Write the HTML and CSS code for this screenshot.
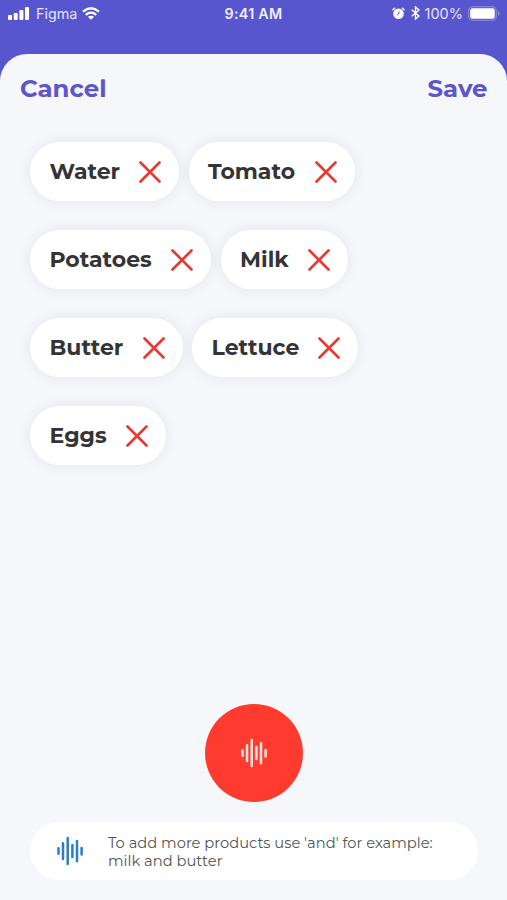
FILE: index.html
```html
<!DOCTYPE html>
<html lang="en">
<head>
<meta charset="utf-8">
<title>Shopping list</title>
<link rel="stylesheet" href="styles.css">
</head>
<body>
<svg class="defs" aria-hidden="true">
  <symbol id="cross" viewBox="0 0 22 22"><path d="M1.5 1.5 20.5 20.5M20.5 1.5 1.5 20.5" fill="none" stroke="currentColor" stroke-width="2.7" stroke-linecap="round"/></symbol>
  <symbol id="wave" viewBox="0 0 28 30"><path d="M2.5 12.3v5.4M7 7.3v15.7M11.7 2v26M16.4 9v12M21 5v20.3M25.6 12v6.5" fill="none" stroke="currentColor" stroke-width="2.5" stroke-linecap="round"/></symbol>
</svg>
<div class="screen">
  <header class="status">
    <div class="status-left">
      <svg width="21" height="13" viewBox="0 0 21 13" fill="#fff"><rect x="0" y="8" width="4" height="5" rx="1"/><rect x="5.7" y="6" width="4" height="7" rx="1"/><rect x="11.4" y="3" width="4" height="10" rx="1"/><rect x="17" y="0" width="4" height="13" rx="1"/></svg>
      <span class="carrier">Figma</span>
      <svg width="18" height="13" viewBox="0 0 18 13" fill="none" stroke="#fff" stroke-width="2.3"><path d="M1 4.6Q9-2 17 4.6M3.8 7.8Q9 3.5 14.2 7.8"/><path d="M9 12.8 5.9 9.8Q9 7.6 12.1 9.8Z" fill="#fff" stroke="none"/></svg>
    </div>
    <span class="time">9:41 AM</span>
    <div class="status-right">
      <svg width="13" height="13" viewBox="0 0 13 13"><circle cx="6.5" cy="6.8" r="5.3" fill="#fff"/><path d="M.9 2.8 2.6 1.2M12.1 2.8 10.4 1.2" stroke="#fff" stroke-width="1.4" stroke-linecap="round"/><path d="M7.2 4.3 6.6 7.1 5.2 8.2" fill="none" stroke="#5856ce" stroke-width="1"/></svg>
      <svg class="bluetooth" width="9" height="14" viewBox="0 0 9 14" fill="none" stroke="#fff" stroke-width="1.4"><path d="M.7 3.7 8 10 4.5 13V1L8 4 .7 10.3"/></svg>
      <span class="percent">100%</span>
      <svg width="32" height="15" viewBox="0 0 32 15"><rect x=".7" y=".7" width="27.6" height="13.6" rx="3.8" fill="none" stroke="#918fdf" stroke-width="1.1"/><rect x="2.2" y="2.2" width="24.6" height="10.6" rx="2.2" fill="#fff"/><path d="M30 5v5q1.6-.8 1.6-2.5T30 5Z" fill="#918fdf"/></svg>
    </div>
  </header>
  <main class="sheet">
    <nav class="actions"><span class="cancel">Cancel</span><span class="save">Save</span></nav>
    <section class="products">
      <div class="row">
        <div class="chip"><span class="label water">Water</span><svg class="cross"><use href="#cross"/></svg></div>
        <div class="chip"><span class="label tomato">Tomato</span><svg class="cross"><use href="#cross"/></svg></div>
      </div>
      <div class="row">
        <div class="chip"><span class="label potatoes">Potatoes</span><svg class="cross"><use href="#cross"/></svg></div>
        <div class="chip"><span class="label milk">Milk</span><svg class="cross"><use href="#cross"/></svg></div>
      </div>
      <div class="row">
        <div class="chip"><span class="label butter">Butter</span><svg class="cross"><use href="#cross"/></svg></div>
        <div class="chip"><span class="label lettuce">Lettuce</span><svg class="cross"><use href="#cross"/></svg></div>
      </div>
      <div class="row">
        <div class="chip"><span class="label eggs">Eggs</span><svg class="cross"><use href="#cross"/></svg></div>
      </div>
    </section>
    <div class="record"><svg class="wave"><use href="#wave"/></svg></div>
    <div class="hint">
      <svg class="wave"><use href="#wave"/></svg>
      <p>To add more products use 'and' for example:<br>milk and butter</p>
    </div>
  </main>
</div>
</body>
</html>
```
FILE: styles.css
```css
* { box-sizing: border-box; }
body { margin: 0; font-family: Montserrat, Inter, sans-serif; }
svg { display: block; flex: none; }
.defs { position: absolute; width: 0; height: 0; }
.screen { width: 507px; height: 900px; background: #5856ce; overflow: hidden; display: flex; flex-direction: column; }
.status { height: 54px; flex: none; padding: 0 7px 28px 8px; display: grid; grid-template-columns: 1fr auto 1fr; align-items: center; color: #fff; font-family: Inter, sans-serif; font-size: 14.5px; }
.status-left, .status-right { display: flex; align-items: center; }
.status-right { justify-content: flex-end; }
.carrier { margin: 0 5px 0 7px; font-size: 14.3px; color: #e4e3fb; }
.time { font-weight: 600; font-size: 14.3px; letter-spacing: .25px; color: #f0efff; margin-right: 1px; }
.bluetooth { margin: 0 5px 0 6px; }
.percent { color: #e4e3fb; margin-right: 5px; }
.sheet { flex: 1; background: #f5f7fb; border-radius: 27px 27px 0 0; display: flex; flex-direction: column; }
.actions { display: flex; justify-content: space-between; padding: 0 19.5px 0 20px; height: 69px; line-height: 69px; flex: none; color: #5c55cc; font-size: 24.4px; font-weight: 700; }
.products { display: flex; flex-direction: column; gap: 29px; padding: 19px 30px 0; }
.row { display: flex; gap: 9.5px; }
.chip { height: 59px; border-radius: 30px; background: #fff; box-shadow: 0 0 14px rgba(40, 40, 50, .09); padding: 0 18px 0 19.5px; display: flex; align-items: center; gap: 19.5px; }
.label { font-size: 22px; line-height: 28px; font-weight: 700; color: #343436; white-space: nowrap; }
.water { width: 70px; }
.tomato { width: 87px; }
.potatoes { width: 102px; }
.milk { width: 48px; }
.butter { width: 73.5px; }
.lettuce { width: 87px; }
.eggs { width: 57px; }
.cross { width: 22px; height: 22px; color: #e63b35; }
.record { width: 98px; height: 98px; border-radius: 50%; background: #ff3b2f; margin: auto auto 20px 205px; display: flex; align-items: center; justify-content: center; color: #ffe3df; }
.wave { width: 28px; height: 30px; }
.hint { height: 58px; margin: 0 29px 20px 30px; border-radius: 29px; background: #fff; display: flex; align-items: center; padding-left: 26px; gap: 24px; color: #2e7cc9; }
.hint p { margin: 2px 0 0; font-size: 14.7px; line-height: 18px; color: #555; white-space: nowrap; }
```
